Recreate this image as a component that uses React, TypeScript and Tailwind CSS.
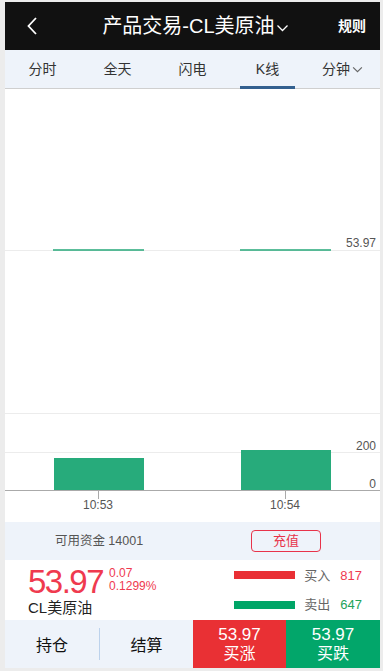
import React from 'react';

const tabs = ['分时', '全天', '闪电', 'K线', '分钟'];

const Chevron: React.FC<{ className?: string }> = ({ className }) => (
  <svg viewBox="0 0 12 8" className={className} fill="none" stroke="currentColor" strokeWidth="1.3">
    <path d="M1 1.5 L6 6.5 L11 1.5" />
  </svg>
);

const KChart: React.FC = () => (
  <svg width="375" height="433" className="block" style={{ fontFamily: '"Liberation Sans", Arial, sans-serif' }}>
    {/* grid */}
    <line x1="0" x2="375" y1="161.5" y2="161.5" stroke="#ececec" />
    <line x1="0" x2="375" y1="324.5" y2="324.5" stroke="#ececec" />
    <line x1="0" x2="375" y1="363.5" y2="363.5" stroke="#ececec" />
    {/* candles (flat) */}
    <line x1="48" x2="139" y1="161" y2="161" stroke="#26a97a" strokeWidth="1.5" />
    <line x1="235" x2="326" y1="161" y2="161" stroke="#26a97a" strokeWidth="1.5" />
    <text x="371" y="158" textAnchor="end" fontSize="12" fill="#555">53.97</text>
    {/* volume */}
    <rect x="49" y="369" width="90" height="32" fill="#27ab7b" />
    <rect x="236" y="361" width="90" height="40" fill="#27ab7b" />
    <text x="371" y="361" textAnchor="end" fontSize="12" fill="#555">200</text>
    <text x="371" y="399" textAnchor="end" fontSize="12" fill="#555">0</text>
    {/* axis */}
    <line x1="0" x2="375" y1="401.5" y2="401.5" stroke="#aaa" />
    <line x1="93.5" x2="93.5" y1="401" y2="410" stroke="#aaa" />
    <line x1="280.5" x2="280.5" y1="401" y2="410" stroke="#aaa" />
    <text x="93" y="420" textAnchor="middle" fontSize="12" fill="#555">10:53</text>
    <text x="280" y="420" textAnchor="middle" fontSize="12" fill="#555">10:54</text>
  </svg>
);

const App: React.FC = () => {
  return (
    <div
      className="w-[383px] h-[671px] bg-[#ececec] pl-[5px] pt-[2px] pr-[3px] pb-[3px]"
      style={{ fontFamily: '"Liberation Sans", Arial, "Noto Sans CJK SC", sans-serif' }}
    >
      <div className="w-[375px] h-[666px] flex flex-col bg-white overflow-hidden">
        {/* header */}
        <div className="h-[48px] bg-[#111111] flex items-center justify-between px-[14px] text-white">
          <div className="w-[40px] pl-[8px]">
            <svg viewBox="0 0 10 18" className="w-[10px] h-[18px]" fill="none" stroke="currentColor" strokeWidth="1.8">
              <path d="M9 1 L1.5 9 L9 17" />
            </svg>
          </div>
          <div className="flex items-center text-[20px] pl-[6px]">
            产品交易-CL美原油
            <Chevron className="w-[13px] h-[8px] ml-[1px] mt-[3px]" />
          </div>
          <div className="w-[40px] text-right text-[14px] font-bold">规则</div>
        </div>

        {/* tabs */}
        <div className="h-[39px] bg-[#eef3fa] border-b border-[#cfcfcf] grid grid-cols-5 text-[14px] text-[#333]">
          {tabs.map((t, i) => (
            <div key={t} className="relative flex items-center justify-center">
              {t}
              {i === 4 && <Chevron className="w-[11px] h-[7px] ml-[2px] text-[#666]" />}
              {i === 3 && <div className="absolute bottom-[-1px] left-[10px] right-[10px] h-[3px] bg-[#33608f]" />}
            </div>
          ))}
        </div>

        {/* chart */}
        <KChart />

        {/* funds */}
        <div className="h-[38px] bg-[#eef3fa] flex items-center text-[12.5px] text-[#555]">
          <div className="w-[188px] text-center">可用资金 14001</div>
          <div className="ml-[58px] w-[70px] h-[22px] border border-[#e8334a] rounded-[4px] text-[#e8334a] text-[13px] flex items-center justify-center">
            充值
          </div>
        </div>

        {/* quote */}
        <div className="h-[60px] flex pl-[23px] pr-[18px]">
          <div className="flex flex-col pt-[5px]">
            <div className="flex items-start">
              <span className="text-[33px] leading-[33px] tracking-[-1.5px] text-[#ef3a4f]">53.97</span>
              <div className="ml-[6px] flex flex-col text-[12px] leading-[13px] text-[#ef3a4f] pt-[2px]">
                <span>0.07</span>
                <span>0.1299%</span>
              </div>
            </div>
            <div className="text-[15px] leading-[18px] text-[#222] mt-[1px]">CL美原油</div>
          </div>
          <div className="ml-auto flex flex-col justify-center gap-[10px] text-[13px]">
            <div className="flex items-center">
              <div className="w-[61px] h-[8px] bg-[#e92f35]" />
              <span className="ml-[9px] text-[#666]">买入</span>
              <span className="ml-[10px] text-[#ef3a4f]">817</span>
            </div>
            <div className="flex items-center">
              <div className="w-[61px] h-[8px] bg-[#00a567]" />
              <span className="ml-[9px] text-[#666]">卖出</span>
              <span className="ml-[10px] text-[#22a35a]">647</span>
            </div>
          </div>
        </div>

        {/* actions */}
        <div className="h-[48px] flex bg-[#eef3fa]">
          <div className="w-[94px] flex items-center justify-center text-[16px] text-[#111] pt-[3px]">持仓</div>
          <div className="w-px h-[32px] self-center bg-[#bcd2ec]" />
          <div className="w-[93px] flex items-center justify-center text-[16px] text-[#111] pt-[3px]">结算</div>
          <div className="w-[93px] bg-[#e93034] text-white flex flex-col items-center justify-center leading-[19px]">
            <span className="text-[17px]">53.97</span>
            <span className="text-[16px]">买涨</span>
          </div>
          <div className="flex-1 bg-[#02a66a] text-white flex flex-col items-center justify-center leading-[19px]">
            <span className="text-[17px]">53.97</span>
            <span className="text-[16px]">买跌</span>
          </div>
        </div>
      </div>
    </div>
  );
};

export default App;
